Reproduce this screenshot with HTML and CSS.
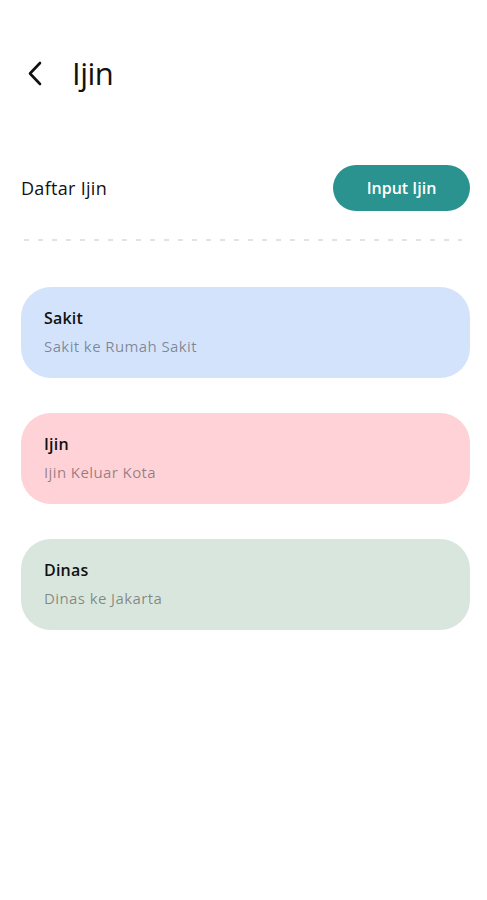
FILE: index.html
```html
<!DOCTYPE html>
<html>
<head>
<meta charset="utf-8">
<link rel="stylesheet" href="styles.css">
</head>
<body>
<div class="page">
  <header class="topbar">
    <span class="back">
      <svg width="16" height="25" viewBox="0 0 16 25"><path d="M13 2 L3 12.5 L13 23" fill="none" stroke="#111" stroke-width="2.6" stroke-linecap="round" stroke-linejoin="round"/></svg>
    </span>
    <h1 class="title">Ijin</h1>
  </header>
  <section class="listhead">
    <span class="listlabel">Daftar Ijin</span>
    <button class="btn">Input Ijin</button>
  </section>
  <div class="divider"></div>
  <ul class="cards">
    <li class="card blue"><div class="card-title">Sakit</div><div class="card-sub">Sakit ke Rumah Sakit</div></li>
    <li class="card pink"><div class="card-title">Ijin</div><div class="card-sub">Ijin Keluar Kota</div></li>
    <li class="card green"><div class="card-title">Dinas</div><div class="card-sub">Dinas ke Jakarta</div></li>
  </ul>
</div>
</body>
</html>
```
FILE: styles.css
```css
* { box-sizing: border-box; }
html, body { margin: 0; padding: 0; background: #fff; }
body { font-family: "Open Sans", "Noto Sans", sans-serif; color: #111; }
.page { padding: 49px 17px 0 21px; }
.topbar { display: flex; align-items: center; height: 48px; }
.back { display: flex; width: 16px; margin-left: 6px; }
.title { margin: 0 0 0 29px; font-size: 31px; font-weight: 500; line-height: 1; letter-spacing: -0.5px; }
.listhead { margin-top: 68px; display: flex; align-items: center; justify-content: space-between; height: 46px; }
.listlabel { font-size: 18px; font-weight: 500; letter-spacing: 0.3px; }
.btn { width: 137px; height: 46px; border: none; border-radius: 23px; background: #2a9390; color: #fff; font-family: inherit; font-size: 16px; font-weight: 600; padding: 0; }
.divider { margin: 28px 8px 0 3px; height: 2px; background-image: repeating-linear-gradient(to right, #e2e2e2 0 5px, transparent 5px 14px); }
.cards { list-style: none; margin: 46px 0 0; padding: 0; display: flex; flex-direction: column; gap: 35px; }
.card { height: 91px; border-radius: 30px; padding: 20px 23px 0; }
.card-title { font-size: 16px; font-weight: 600; line-height: 22px; letter-spacing: 0.2px; }
.card-sub { margin-top: 8px; font-size: 15px; line-height: 19px; letter-spacing: 0.4px; color: rgba(0,0,0,0.42); }
.blue { background: #d4e3fc; }
.pink { background: #fed2d6; }
.green { background: #d9e6dd; }
```
